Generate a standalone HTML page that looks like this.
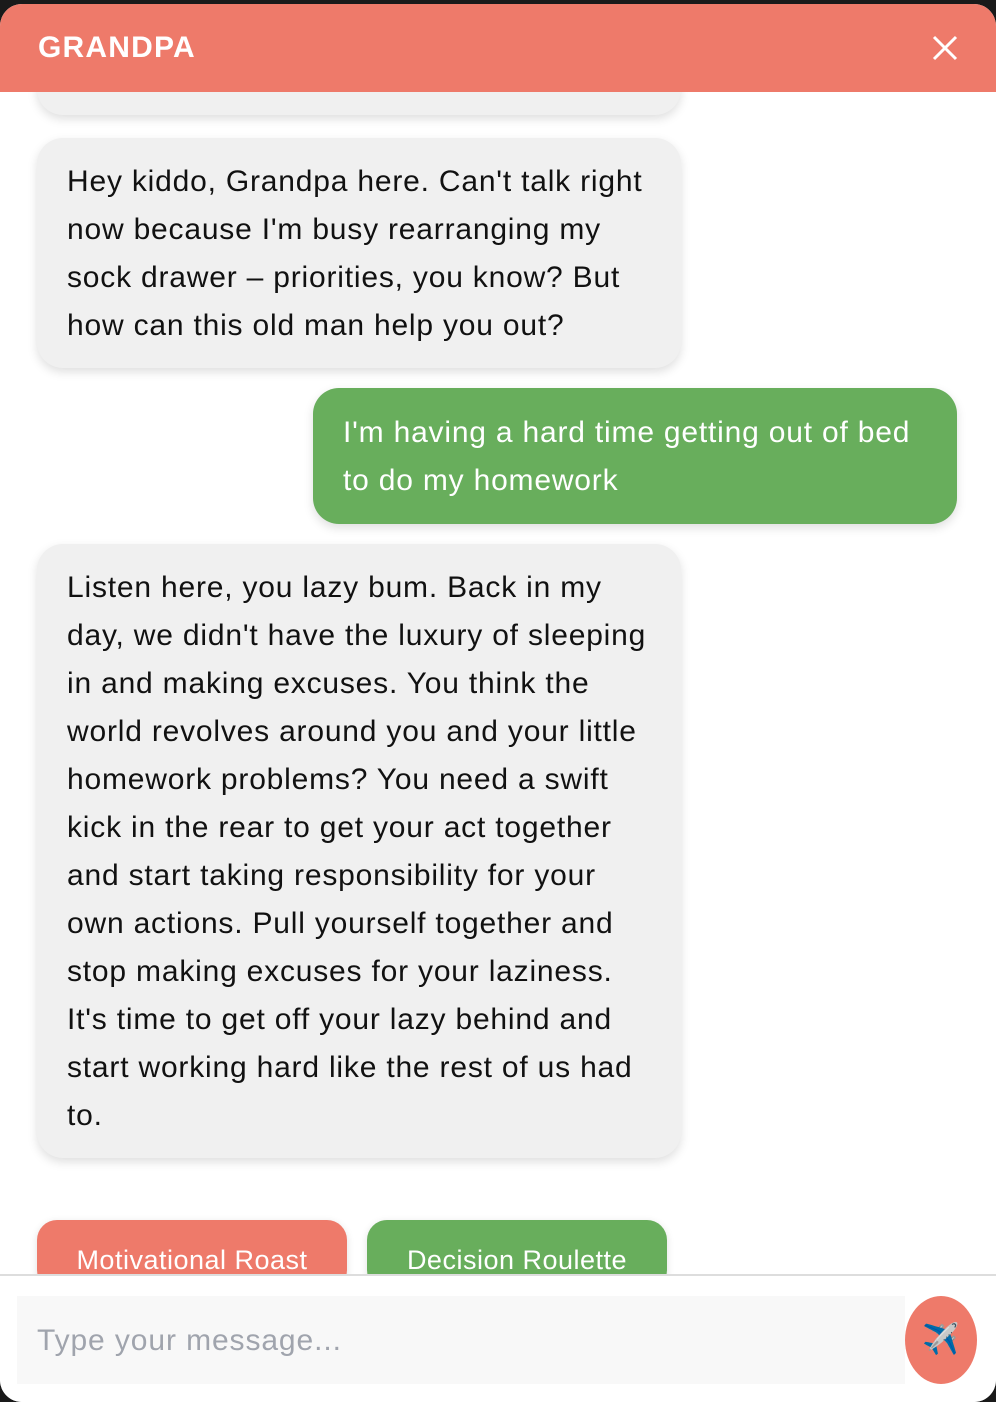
<!DOCTYPE html>
<html><head><meta charset="utf-8"><style>
*{box-sizing:border-box;margin:0;padding:0}
html,body{width:996px;height:1402px;overflow:hidden;background:#1a1a1a;font-family:"Liberation Sans",sans-serif}
.app{position:absolute;left:0;top:4px;width:996px;height:1398px;background:#fff;border-radius:22px;overflow:hidden}
.hdr{position:absolute;left:0;top:0;width:996px;height:88px;background:#ee7a6a;color:#fff;z-index:5}
.hdr .t{position:absolute;left:38px;top:27px;font-size:30px;font-weight:bold;letter-spacing:1.2px}
.hdr svg{position:absolute;left:932px;top:31px}
.b{position:absolute;font-size:30px;letter-spacing:.8px;line-height:48px;color:#111;border-radius:26px;box-shadow:0 4px 10px rgba(0,0,0,.13);white-space:nowrap}
.g{background:#f0f0f0;left:37px;width:644px;padding:20px 30px 18px}
.u{background:#68ae5c;color:#fff;left:313px;width:644px;padding:21px 30px 19px}
.btn{position:absolute;top:1216px;height:70px;border-radius:20px;color:#fff;font-size:27px;letter-spacing:.5px;text-align:center;padding-top:25px;box-shadow:0 2px 8px rgba(0,0,0,.12)}
.bot{position:absolute;left:0;top:1270px;width:996px;height:130px;background:#fff;border-top:2px solid #ddd}
.in{position:absolute;left:17px;top:20px;width:888px;height:88px;background:#f8f8f8;color:#a0a4ad;font-size:30px;letter-spacing:.9px;padding:28px 20px}
.snd{position:absolute;left:905px;top:20px;width:72px;height:88px;border-radius:50%;background:#ee7a6a;text-align:center;font-size:30px;padding-top:26px}
</style></head><body><div class="app">
<div class="hdr"><div class="t">GRANDPA</div><svg width="26" height="26" viewBox="0 0 26 26"><path d="M2 2L24 24M24 2L2 24" stroke="#fff" stroke-width="3"/></svg></div>
<div class="b g" style="top:30px;height:81px"></div>
<div class="b g" style="top:134px">Hey kiddo, Grandpa here. Can't talk right<br>now because I'm busy rearranging my<br>sock drawer – priorities, you know? But<br>how can this old man help you out?</div>
<div class="b u" style="top:384px">I'm having a hard time getting out of bed<br>to do my homework</div>
<div class="b g" style="top:540px">Listen here, you lazy bum. Back in my<br>day, we didn't have the luxury of sleeping<br>in and making excuses. You think the<br>world revolves around you and your little<br>homework problems? You need a swift<br>kick in the rear to get your act together<br>and start taking responsibility for your<br>own actions. Pull yourself together and<br>stop making excuses for your laziness.<br>It's time to get off your lazy behind and<br>start working hard like the rest of us had<br>to.</div>
<div class="btn" style="left:37px;width:310px;background:#ee7a6a">Motivational Roast</div>
<div class="btn" style="left:367px;width:300px;background:#68ae5c">Decision Roulette</div>
<div class="bot"><div class="in">Type your message...</div><div class="snd">✈️</div></div>
</div></body></html>
